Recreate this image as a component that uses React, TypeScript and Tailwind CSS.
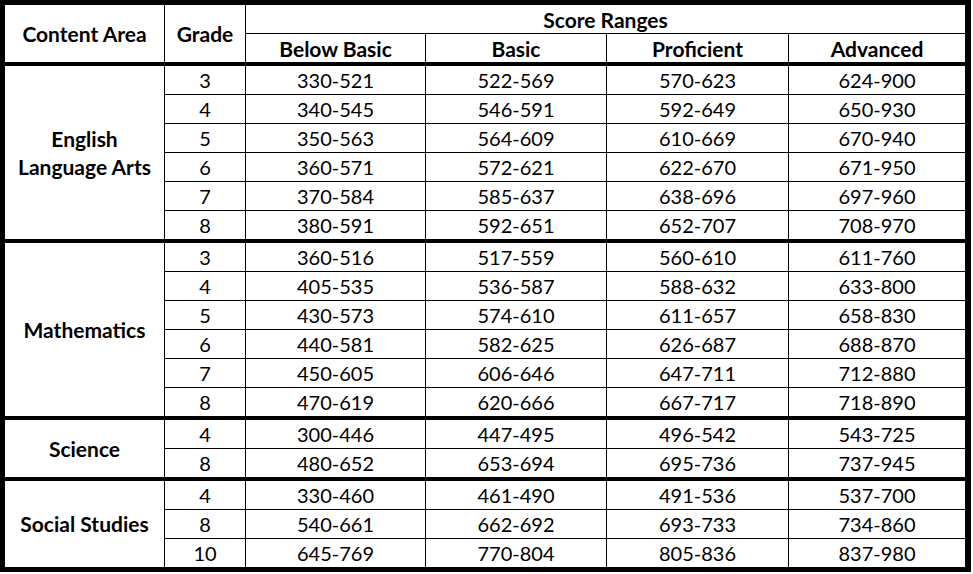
import React from 'react';

type Group = { area: string[]; rows: [string, string, string, string, string][] };

const groups: Group[] = [
  {
    area: ['English', 'Language Arts'],
    rows: [
      ['3', '330-521', '522-569', '570-623', '624-900'],
      ['4', '340-545', '546-591', '592-649', '650-930'],
      ['5', '350-563', '564-609', '610-669', '670-940'],
      ['6', '360-571', '572-621', '622-670', '671-950'],
      ['7', '370-584', '585-637', '638-696', '697-960'],
      ['8', '380-591', '592-651', '652-707', '708-970'],
    ],
  },
  {
    area: ['Mathematics'],
    rows: [
      ['3', '360-516', '517-559', '560-610', '611-760'],
      ['4', '405-535', '536-587', '588-632', '633-800'],
      ['5', '430-573', '574-610', '611-657', '658-830'],
      ['6', '440-581', '582-625', '626-687', '688-870'],
      ['7', '450-605', '606-646', '647-711', '712-880'],
      ['8', '470-619', '620-666', '667-717', '718-890'],
    ],
  },
  {
    area: ['Science'],
    rows: [
      ['4', '300-446', '447-495', '496-542', '543-725'],
      ['8', '480-652', '653-694', '695-736', '737-945'],
    ],
  },
  {
    area: ['Social Studies'],
    rows: [
      ['4', '330-460', '461-490', '491-536', '537-700'],
      ['8', '540-661', '662-692', '693-733', '734-860'],
      ['10', '645-769', '770-804', '805-836', '837-980'],
    ],
  },
];

const levels = ['Below Basic', 'Basic', 'Proficient', 'Advanced'];

export default function App() {
  return (
    <div className="w-[973px] h-[574px] bg-white">
      <div className="w-[971px] border-[5px] border-r-[6px] border-black">
        <table
          className="w-[960px] table-fixed border-separate border-spacing-0 text-center text-[20px] leading-none text-black"
          style={{ fontFamily: 'Lato, "Open Sans", sans-serif' }}
        >
          <colgroup>
            <col className="w-[160px]" />
            <col className="w-[81px]" />
            <col className="w-[180px]" />
            <col className="w-[181px]" />
            <col className="w-[182px]" />
            <col className="w-[176px]" />
          </colgroup>
          <thead>
            <tr>
              <th rowSpan={2} className="border-r border-b-4 border-black p-0 text-[21px] font-bold">
                Content Area
              </th>
              <th rowSpan={2} className="border-r border-b-4 border-black p-0 text-[21px] font-bold">
                Grade
              </th>
              <th colSpan={4} className="h-[29px] border-b border-black p-0 text-[21px] font-bold">
                Score Ranges
              </th>
            </tr>
            <tr>
              {levels.map((l, j) => (
                <th
                  key={l}
                  className={
                    j === 3
                      ? 'h-[32px] border-b-4 border-black p-0 text-[21px] font-bold'
                      : 'h-[32px] border-r border-b-4 border-black p-0 text-[21px] font-bold'
                  }
                >
                  {l}
                </th>
              ))}
            </tr>
          </thead>
          {groups.map((g, gi) => {
            const lastGroup = gi === groups.length - 1;
            return (
              <tbody key={g.area.join(' ')}>
                {g.rows.map((r, i) => {
                  const lastRow = i === g.rows.length - 1;
                  let rowCls = 'h-[29px] border-b';
                  if (lastRow) rowCls = lastGroup ? 'h-[28px] border-b-0' : 'h-[32px] border-b-4';
                  return (
                    <tr key={r[0]}>
                      {i === 0 && (
                        <td
                          rowSpan={g.rows.length}
                          className={
                            lastGroup
                              ? 'border-r border-black p-0 text-[21px] font-bold leading-[28px]'
                              : 'border-r border-b-4 border-black p-0 text-[21px] font-bold leading-[28px]'
                          }
                        >
                          {g.area.map((a) => (
                            <div key={a}>{a}</div>
                          ))}
                        </td>
                      )}
                      {r.map((c, j) => (
                        <td
                          key={j}
                          className={`${rowCls} ${j === 4 ? '' : 'border-r'} border-black p-0`}
                        >
                          {c}
                        </td>
                      ))}
                    </tr>
                  );
                })}
              </tbody>
            );
          })}
        </table>
      </div>
    </div>
  );
}
